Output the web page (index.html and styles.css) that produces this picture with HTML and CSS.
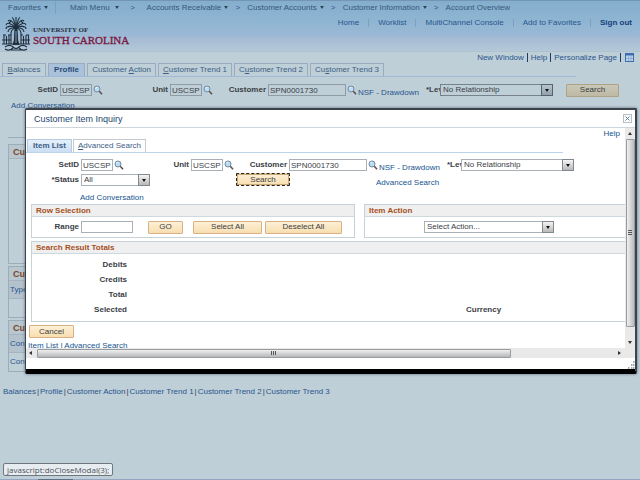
FILE: index.html
```html
<!DOCTYPE html>
<html lang="en">
<head>
<meta charset="utf-8">
<title>Account Overview</title>
<link rel="stylesheet" href="styles.css">
</head>
<body>
<svg class="defs" aria-hidden="true">
  <symbol id="lens" viewBox="0 0 10 10">
    <circle cx="4" cy="4" r="3" fill="#b9dcf3" stroke="#6f8ba3" stroke-width="1"/>
    <path d="M2.6 3.6a1.6 1.6 0 0 1 1.6-1.3" fill="none" stroke="#fff" stroke-width=".8"/>
    <path d="M6.3 6.3 9 9.2" stroke="#5b4a45" stroke-width="1.5"/>
  </symbol>
</svg>

<div class="page">
  <header class="banner">
    <nav class="crumbs">
      <a href="#" class="crumb crumb-fav">Favorites<i class="caret"></i></a>
      <a href="#" class="crumb crumb-main">Main Menu<i class="caret caret-wide"></i></a>
      <span class="sep">&gt;</span>
      <a href="#" class="crumb">Accounts Receivable<i class="caret"></i></a>
      <span class="sep">&gt;</span>
      <a href="#" class="crumb">Customer Accounts<i class="caret"></i></a>
      <span class="sep">&gt;</span>
      <a href="#" class="crumb">Customer Information<i class="caret"></i></a>
      <span class="sep">&gt;</span>
      <a href="#" class="crumb">Account Overview</a>
    </nav>
    <div class="brand-row">
      <div class="brand">
        <svg class="crest" viewBox="0 0 28 35" aria-hidden="true">
          <g fill="none" stroke="#1f2f3d" stroke-width="1.1">
            <path d="M14 12C11 5 8 3 6 5M14 12C12 4 11 1 10 2M14 12V1M14 12C16 4 17 1 18 2M14 12C17 5 20 3 22 5"/>
            <path d="M14 12C9 7 5 6 4 9M14 12C9 9 4 10 4 13M14 12C10 11 6 13 6 16M14 12C19 7 23 6 24 9M14 12C19 9 24 10 24 13M14 12C18 11 22 13 22 16"/>
            <path d="M14 12C11 12 9 15 9 17M14 12C17 12 19 15 19 17M7 7l2-2M19 5l2 2M6 11l3-1M19 10l3 1"/>
            <path d="M2 28V19M4.500 28V20M7 28V19M1 19h3M6 19h3M9 28V17M19 28V17M21.500 28V20M24 28V19M26.500 28V19M19 19h2M24 19h3M0 28h11M17 28h11M0 24h9M19 24h9"/>
            <path d="M3 31c3-2 6-2 8 0s4 2 6 0 5-2 8 0M3 33c3 2 6 1 8-1M25 33c-3 2-6 1-8-1M9 34h10"/>
          </g>
          <path d="M12.500 12h3l.6 12 1.400 5h-7l1.400-5z" fill="#1f2f3d"/>
          <path d="M14 15v12" stroke="#9db8cf" stroke-width=".8"/>
        </svg>
        <div class="wordmark">
          <span class="wm-top">UNIVERSITY OF</span>
          <span class="wm-main">SOUTH CAROLINA</span>
        </div>
      </div>
      <nav class="toplinks">
        <a href="#">Home</a>
        <a href="#">Worklist</a>
        <a href="#">MultiChannel Console</a>
        <a href="#">Add to Favorites</a>
        <a href="#" class="signout">Sign out</a>
      </nav>
    </div>
  </header>

  <div class="pagebar">
    <a href="#">New Window</a><a href="#">Help</a><a href="#">Personalize Page</a>
    <svg class="grid-icon" viewBox="0 0 9 9" aria-hidden="true">
      <rect x=".5" y=".5" width="8" height="8" fill="#bcd2ea" stroke="#3d6fae"/>
      <path d="M0 1.500h9" stroke="#3d6fae" stroke-width="2"/>
      <path d="M3.500 3v5M6 3v5M1 5.500h7" stroke="#7fa3ce" stroke-width=".7"/>
    </svg>
  </div>

  <nav class="tabs">
    <a href="#" class="tab tab-s"><span><u>B</u>alances</span></a>
    <a href="#" class="tab tab-on tab-p">Profile</a>
    <a href="#" class="tab tab-m"><span>Customer <u>A</u>ction</span></a>
    <a href="#" class="tab tab-l"><span><u>C</u>ustomer Trend 1</span></a>
    <a href="#" class="tab tab-l"><span>C<u>u</u>stomer Trend 2</span></a>
    <a href="#" class="tab tab-l"><span>Cu<u>s</u>tomer Trend 3</span></a>
  </nav>

  <form class="criteria">
    <label for="p-setid">SetID</label><input id="p-setid" value="USCSP"><svg class="lens"><use href="#lens"/></svg>
    <label for="p-unit">Unit</label><input id="p-unit" value="USCSP"><svg class="lens"><use href="#lens"/></svg>
    <label for="p-cust">Customer</label><input id="p-cust" value="SPN0001730"><svg class="lens"><use href="#lens"/></svg>
    <a href="#" class="nsf">NSF - Drawdown</a>
    <label for="p-lev" class="lev">*Lev</label>
    <span class="pick"><select id="p-lev"><option>No Relationship</option></select></span>
    <button type="button" class="btn">Search</button>
  </form>
  <a href="#" class="add-conv">Add Conversation</a>

  <main class="panels">
    <section class="panel panel-tall"><h2>Cus</h2></section>
    <section class="panel"><h2>Cus</h2><p class="shade">Type</p><p></p></section>
    <section class="panel"><h2>Cus</h2><p class="shade">Cont</p><p>Cont</p></section>
  </main>

  <footer class="footlinks">
    <a href="#">Balances</a><i>|</i><a href="#">Profile</a><i>|</i><a href="#">Customer Action</a><i>|</i><a href="#">Customer Trend 1</a><i>|</i><a href="#">Customer Trend 2</a><i>|</i><a href="#">Customer Trend 3</a>
  </footer>
  <div class="edge"></div>
</div>

<div class="modal" role="dialog" aria-labelledby="dlg-title">
  <div class="modal-head">
    <h1 id="dlg-title">Customer Item Inquiry</h1>
    <button type="button" class="close" aria-label="Close"><svg viewBox="0 0 5 5"><path d="M.5.5l4 4M4.500.5l-4 4" stroke="#5c7d9c" stroke-width="1"/></svg></button>
  </div>
  <div class="modal-mid">
    <div class="modal-body">
      <div class="help"><a href="#">Help</a></div>
      <nav class="tabs tabs-modal">
        <a href="#" class="tab tab-on tab-i">Item List</a>
        <a href="#" class="tab tab-l"><span><u>A</u>dvanced Search</span></a>
      </nav>
      <form>
        <div class="criteria criteria-modal">
          <label for="m-setid">SetID</label><input id="m-setid" value="USCSP"><svg class="lens"><use href="#lens"/></svg>
          <label for="m-unit">Unit</label><input id="m-unit" value="USCSP"><svg class="lens"><use href="#lens"/></svg>
          <label for="m-cust">Customer</label><input id="m-cust" value="SPN0001730"><svg class="lens"><use href="#lens"/></svg>
          <a href="#" class="nsf">NSF - Drawdown</a>
          <label for="m-lev" class="lev">*Lev</label>
          <span class="pick"><select id="m-lev"><option>No Relationship</option></select></span>
        </div>
        <div class="status-row">
          <label for="m-status">*Status</label>
          <span class="pick"><select id="m-status"><option>All</option></select></span>
          <button type="button" class="btn btn-focus">Search</button>
          <a href="#">Advanced Search</a>
        </div>
        <a href="#" class="add-conv">Add Conversation</a>
        <div class="groups">
          <section class="group">
            <h2>Row Selection</h2>
            <div class="group-row">
              <label for="range">Range</label><input id="range">
              <button type="button" class="btn btn-go">GO</button>
              <button type="button" class="btn btn-sel">Select All</button>
              <button type="button" class="btn btn-desel">Deselect All</button>
            </div>
          </section>
          <section class="group group-open">
            <h2>Item Action</h2>
            <div class="group-row action-row">
              <span class="pick"><select aria-label="Item Action"><option>Select Action...</option></select></span>
            </div>
          </section>
        </div>
        <section class="group group-open totals">
          <h2>Search Result Totals</h2>
          <dl>
            <dt>Debits</dt><dd></dd>
            <dt>Credits</dt><dd></dd>
            <dt>Total</dt><dd></dd>
            <dt>Selected</dt><dd>Currency</dd>
          </dl>
        </section>
        <button type="button" class="btn btn-cancel">Cancel</button>
      </form>
      <div class="modal-links"><a href="#">Item List</a> | <a href="#">Advanced Search</a></div>
    </div>
    <div class="vbar"><i class="arrow up"></i><div class="thumb"><i class="grip"></i></div><i class="arrow down"></i></div>
  </div>
  <div class="hbar"><i class="arrow left"></i><div class="thumb"><i class="grip"></i></div><i class="arrow right"></i></div>
  <div class="modal-foot">
    <svg viewBox="0 0 8 8" aria-hidden="true"><path d="M6 1h1.500M4 4h1.500M6 4h1.500M1 7h1.500M4 7h1.500M6 7h1.500" stroke="#8a8f94" stroke-width="1.300"/></svg>
  </div>
</div>

<div class="hint">javascript:doCloseModal(3);</div>
</body>
</html>
```
FILE: styles.css
```css
*, *::before, *::after { box-sizing: border-box; }
html, body { height: 100%; }
body {
  margin: 0;
  position: relative;
  background: #bfcfd8;
  color: #3a4046;
  font: 8px/10px "Liberation Sans", Arial, sans-serif;
  overflow: hidden;
}
a { color: #28558d; text-decoration: none; white-space: nowrap; }
h1, h2, p, dl, dd { margin: 0; }
i { font-style: normal; }
input, select, button { font: inherit; color: inherit; margin: 0; border-radius: 0; }
.defs { position: absolute; width: 0; height: 0; }
.page { min-height: 100%; display: flex; flex-direction: column; }

/* banner */
.banner {
  height: 52px;
  background: linear-gradient(#85aecd 0, #8fb5d2 20px, #9bb9d6 35px, #a3bad4 36px, #b4c8d8 50px, #a9bccb 51px, #b9cbd6 52px);
  border-top: 1px solid #7296b4;
}
.crumbs { display: flex; align-items: center; height: 13px; padding-left: 8px; }
.crumb { display: flex; align-items: center; gap: 3px; color: #34587a; }
.crumb-fav { width: 48px; height: 13px; border-right: 1px solid #7c9fbe; }
.crumb-main { margin-left: 14px; }
.caret { border: 2px solid transparent; border-top: 3px solid #2c4658; border-bottom: 0; }
.caret-wide { margin-left: 2px; }
.sep { width: 19px; text-align: center; color: #34587a; }
.crumb-main + .sep { width: 28px; }
.brand-row { display: flex; justify-content: space-between; padding: 2px 8px 0 2px; }
.brand { display: flex; gap: 3px; }
.crest { width: 28px; height: 35px; }
.wordmark { display: flex; flex-direction: column; padding-top: 11px; font-family: "Liberation Serif", serif; white-space: nowrap; }
.wm-top { font-size: 7px; line-height: 7px; font-weight: bold; color: #26313f; }
.wm-main { font-size: 11px; line-height: 12px; color: #761740; -webkit-text-stroke: 0.3px #761740; }
.toplinks { display: flex; align-items: center; height: 14px; }
.toplinks a + a { margin-left: 9px; padding-left: 9px; border-left: 1px solid #809fbc; line-height: 8px; }
.toplinks .signout { font-weight: bold; color: #143f7c; }

.pagebar { display: flex; justify-content: flex-end; align-items: center; height: 11px; padding-right: 6px; }
.pagebar a { padding-right: 3px; margin-right: 3px; border-right: 1px solid #1e3c68; line-height: 9px; }
.grid-icon { width: 9px; height: 9px; margin-left: 1px; }

/* tabs */
.tabs { display: flex; gap: 2px; height: 14px; padding-left: 2px; margin-right: 64px; border-bottom: 1px solid #a4b8d8; }
.tab {
  display: flex; align-items: center; justify-content: center;
  height: 13px; border: 1px solid #9aabbd; border-bottom: 0; color: #3c5e83;
}
.tab-on { background: #a9c1d9; font-weight: bold; color: #2a4d7a; }
.tab-s { width: 44px; }
.tab-p { width: 37px; }
.tab-m { width: 69px; }
.tab-l { width: 74px; }
.tab-i { width: 45px; }
.tabs-modal .tab-l { width: 73px; }
.tabs-modal { margin: 0 62px 0 0; padding-left: 1px; gap: 1px; border-color: #bcd3ec; }
.tabs-modal .tab { border-color: #c5cad2; }
.tabs-modal .tab-on { background: linear-gradient(#e4effa, #cbdef3); border-color: #b4cbe4; }

/* search criteria */
.criteria {
  display: grid;
  grid-template-columns: 60px 32px 12px 66px 32px 12px 54px 78px 12px 68px 14px 113px 66px;
  align-items: center;
  height: 12px;
  margin-top: 5px;
}
.criteria .btn { margin-left: 13px; width: 53px; }
label { font-weight: bold; text-align: right; padding-right: 2px; white-space: nowrap; }
.criteria .lev { text-align: left; padding: 0; }
.nsf { padding-top: 6px; }
input, select {
  width: 100%; height: 12px; padding: 0 1px;
  border: 1px solid #8f9ba5; background: #bfcfd8; line-height: 10px;
}
.lens { width: 10px; height: 10px; margin-left: 1px; }
.pick { display: block; position: relative; }
.pick select { display: block; appearance: none; padding-left: 2px; border-color: #77828c; }
.pick::before {
  content: ""; position: absolute; right: 0; top: 0; width: 12px; height: 12px;
  background: linear-gradient(#b8c4cc, #94a2ac); border: 1px solid #56636e; pointer-events: none;
}
.pick::after {
  content: ""; position: absolute; right: 4px; top: 5px;
  border: 2px solid transparent; border-top: 3px solid #111; border-bottom: 0; pointer-events: none;
}
.btn {
  height: 13px; padding: 0; border: 1px solid #b0a184; border-radius: 1px;
  background: linear-gradient(#c9c8b9, #beb9a3); text-align: center; line-height: 10px;
}
.add-conv { margin: 7px 0 0 11px; }

/* panels behind the dialog */
.panels { margin: 26px 24px 0 8px; padding-top: 6px; border-top: 1px solid #9aabb8; display: flex; flex-direction: column; gap: 2px; }
.panel { border: 1px solid #9dadb8; }
.panel-tall { height: 120px; }
.panel h2 { height: 14px; padding-left: 4px; font: bold 9px/15px "Liberation Sans", Arial, sans-serif; color: #7c4527; background: #b7c6cf; border-bottom: 1px solid #a5b4bf; }
.panel p { height: 18px; padding-left: 1px; line-height: 18px; color: #28558d; }
.panel .shade { background: #b3c2cd; border-bottom: 1px solid #a5b4bf; }
.footlinks { display: flex; gap: 1px; padding: 15px 3px 0; }
.edge { height: 1px; margin-top: auto; background: linear-gradient(90deg, #96a5c4 38px, #5f7184 38px, #5f7184 73px, #96a5c4 73px); }

/* dialog */
.modal {
  position: absolute; left: 25px; right: 3px; top: 108px;
  background: #fff;
  border: solid #3c434a; border-width: 2px 2px 5px 1px; border-bottom-color: #000;
  border-radius: 2px;
  box-shadow: 0 0 3px #55636e;
}
.modal-head { display: flex; justify-content: space-between; align-items: center; height: 18px; padding: 0 3px 0 8px; border-bottom: 1px solid #cfd6db; }
.modal h1 { font-size: 9px; font-weight: normal; color: #24466c; }
.close { width: 9px; height: 9px; padding: 1px; border: 1px solid #b5bfc8; background: #fff; display: flex; }
.close svg { width: 5px; height: 5px; }
.modal-mid { display: flex; }
.modal-body { flex: 1; min-width: 0; height: 220px; overflow: hidden; }
.modal a { color: #16548f; }
.modal .tab { color: #3c5e86; }
.help { text-align: right; height: 11px; padding: 1px 5px 0 0; }
.criteria-modal { grid-template-columns: 55px 32px 12px 66px 32px 12px 54px 78px 12px 68px 14px 113px; margin-top: 4px; }
.modal input, .modal select { border-color: #a9b1b7; background: #fff; }
.modal .pick::before { background: linear-gradient(#f4f4f4, #b9b9b9); border-color: #82888d; }
.modal .btn { background: linear-gradient(#fdf0d5, #f7deb0); border-color: #d9b184; }
.status-row { display: flex; align-items: center; height: 13px; margin-top: 4px; }
.status-row label { width: 55px; }
.status-row .pick { width: 69px; }
.status-row .btn { width: 54px; margin-left: 86px; }
.status-row a { margin-left: 86px; padding-top: 6px; }
.modal .btn-focus { border: 1px dashed #222; outline: 1px solid #c9a878; outline-offset: -2px; }
.modal .add-conv { display: block; margin: 7px 0 0 54px; height: 11px; }
.groups { display: flex; gap: 9px; margin: 0 0 3px 5px; }
.group { width: 324px; border: 1px solid #c7d2d8; }
.group-open { width: auto; flex: 1; border-right: 0; }
.group h2 { height: 12px; padding-left: 4px; background: #efefef; border-bottom: 1px solid #cfd8dd; font-size: 8px; line-height: 11px; color: #a5501c; }
.group-row { display: flex; align-items: center; height: 20px; }
.group-row label { width: 49px; }
.group-row input { width: 52px; }
.btn-go { width: 35px; margin-left: 15px; }
.btn-sel { width: 69px; margin-left: 10px; }
.btn-desel { width: 77px; margin-left: 3px; }
.action-row { padding-left: 59px; }
.action-row .pick { width: 130px; }
.totals { margin-left: 5px; }
.totals dl { display: grid; grid-template-columns: 95px 1fr; line-height: 15px; padding: 3px 0 4px; font-weight: bold; }
.totals dt { text-align: right; }
.totals dd { padding-left: 339px; }
.btn-cancel { display: block; width: 45px; margin: 3px 0 0 3px; }
.modal-links { margin: 3px 0 0 2px; color: #16548f; }

/* scroll bars */
.vbar, .hbar { display: flex; align-items: center; background: #e9e9e9; }
.vbar { flex-direction: column; width: 10px; padding: 4px 0 4px; }
.vbar .thumb { flex: 1; width: 9px; margin: 4px 0 14px; background: linear-gradient(90deg, #f0f0f0, #b9bcc0); }
.hbar { height: 10px; padding: 0 14px 0 3px; }
.hbar .thumb { width: 474px; height: 9px; margin: 0 auto 0 5px; background: linear-gradient(#efefef, #b4b7ba); }
.thumb { display: flex; align-items: center; justify-content: center; border: 1px solid #989c9f; border-radius: 1px; }
.vbar .grip { width: 4px; height: 6px; background: repeating-linear-gradient(#555 0 1px, transparent 1px 2px); }
.hbar .grip { width: 6px; height: 4px; background: repeating-linear-gradient(90deg, #555 0 1px, transparent 1px 2px); }
.arrow { width: 4px; height: 4px; border: 2px solid transparent; }
.up { height: 3px; border-top: 0; border-bottom: 3px solid #333; }
.down { height: 3px; border-bottom: 0; border-top: 3px solid #333; }
.left { width: 3px; border-left: 0; border-right: 3px solid #333; }
.right { width: 3px; border-right: 0; border-left: 3px solid #333; }
.modal-foot { height: 11px; display: flex; justify-content: flex-end; align-items: flex-end; }
.modal-foot svg { width: 8px; height: 8px; }

.hint {
  position: absolute; left: 3px; bottom: 4px; height: 13px; padding: 0 3px;
  border: 1px solid #70777c; border-radius: 2px; background: #e7ecf0;
  color: #4b5257; font: 8px/11px "Open Sans", sans-serif;
}
```
